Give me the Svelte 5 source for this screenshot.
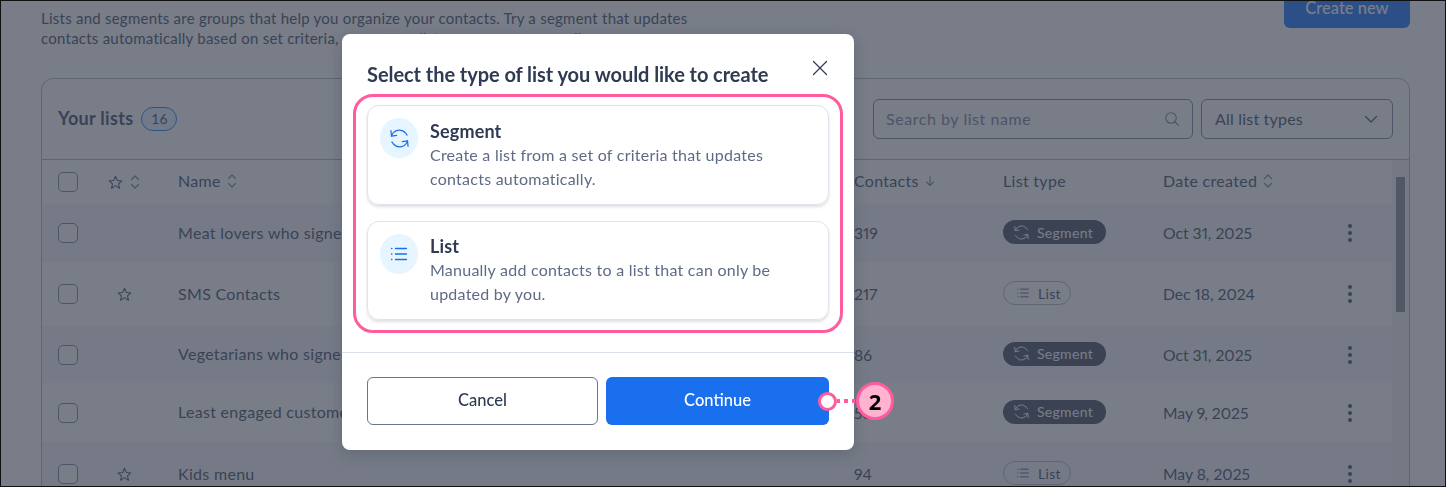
<script lang="ts">
    const rows = [
        { name: 'Meat lovers who signed up', star: false, contacts: '319', type: 'Segment', date: 'Oct 31, 2025', h: 58 },
        { name: 'SMS Contacts', star: true, contacts: '217', type: 'List', date: 'Dec 18, 2024', h: 64 },
        { name: 'Vegetarians who signed up', star: false, contacts: '86', type: 'Segment', date: 'Oct 31, 2025', h: 57 },
        { name: 'Least engaged customers', star: false, contacts: '53', type: 'Segment', date: 'May 9, 2025', h: 59 },
        { name: 'Kids menu', star: true, contacts: '94', type: 'List', date: 'May 8, 2025', h: 64 },
    ];
</script>

{#snippet refresh(size)}
    <svg width={size} height={size} viewBox="0 0 20 20" fill="none" stroke="currentColor" stroke-width="1.3" stroke-linecap="round" stroke-linejoin="round">
        <path d="M1.6 7.5A8.6 8.6 0 0 1 16.4 4.2l1.6 2.2" />
        <path d="M1 1.8l.6 5.7 5.4-.9" />
        <path d="M18.4 12.5A8.6 8.6 0 0 1 3.6 15.8L2 13.6" />
        <path d="M19 18.2l-.6-5.7-5.4.9" />
    </svg>
{/snippet}

{#snippet listIcon(size)}
    <svg width={size} height={size} viewBox="0 0 20 20" fill="none" stroke="currentColor" stroke-width="1.3" stroke-linecap="round">
        <path d="M6.5 4.5h11M6.5 10h11M6.5 15.5h11" />
        <path d="M2.5 4.5h.4M2.5 10h.4M2.5 15.5h.4" />
    </svg>
{/snippet}

{#snippet star()}
    <svg class="star" width="15" height="15" viewBox="0 0 16 16" fill="none" stroke="currentColor" stroke-width="1.1" stroke-linejoin="round">
        <path d="M8 1.4l2 4.4 4.8.5-3.6 3.2 1 4.7L8 11.4l-4.2 2.8 1-4.7L1.2 6.3 6 5.8z" />
    </svg>
{/snippet}

{#snippet sort()}
    <svg class="sort" width="10" height="16" viewBox="0 0 10 16" fill="none" stroke="currentColor" stroke-width="1.2" stroke-linecap="round" stroke-linejoin="round">
        <path d="M1.5 5.5L5 2l3.5 3.5M1.5 10.5L5 14l3.5-3.5" />
    </svg>
{/snippet}

<div class="page">
    <div class="intro">
        <p>Lists and segments are groups that help you organize your contacts. Try a segment that updates contacts automatically based on set criteria, or create a list you manage manually.</p>
        <button class="create">Create new</button>
    </div>

    <div class="panel">
        <div class="panel-head">
            <h2>Your lists</h2>
            <span class="count">16</span>
            <div class="search">
                <span>Search by list name</span>
                <svg width="16" height="16" viewBox="0 0 16 16" fill="none" stroke="currentColor" stroke-width="1.1" stroke-linecap="round">
                    <circle cx="7" cy="7" r="5.3" />
                    <path d="M11 11l3.4 3.4" />
                </svg>
            </div>
            <div class="select">
                <span>All list types</span>
                <svg width="14" height="14" viewBox="0 0 14 14" fill="none" stroke="currentColor" stroke-width="1.2" stroke-linecap="round" stroke-linejoin="round">
                    <path d="M1.5 4.5L7 10l5.5-5.5" />
                </svg>
            </div>
        </div>

        <div class="table">
            <div class="rows">
                <div class="row head">
                    <span class="check"></span>
                    <span class="head-star">{@render star()}{@render sort()}</span>
                    <span class="cell">Name {@render sort()}</span>
                    <span class="cell">Contacts
                        <svg class="down" width="10" height="12" viewBox="0 0 10 12" fill="none" stroke="currentColor" stroke-width="1.1" stroke-linecap="round" stroke-linejoin="round">
                            <path d="M5 1.5v9M1.5 7L5 10.5 8.5 7" />
                        </svg>
                    </span>
                    <span class="cell">List type</span>
                    <span class="cell">Date created {@render sort()}</span>
                    <span></span>
                </div>
                {#each rows as row, i}
                    <div class="row" class:shade={i % 2 === 0} style:height="{row.h}px">
                        <span class="check"></span>
                        <span class="row-star">{#if row.star}{@render star()}{/if}</span>
                        <span class="cell">{row.name}</span>
                        <span class="cell num">{row.contacts}</span>
                        <span class="type">
                            {#if row.type === 'Segment'}
                                <span class="chip segment">{@render refresh(15)}Segment</span>
                            {:else}
                                <span class="chip list">{@render listIcon(14)}List</span>
                            {/if}
                        </span>
                        <span class="cell num">{row.date}</span>
                        <span class="kebab"><i></i><i></i><i></i></span>
                    </div>
                {/each}
            </div>
            <div class="track"><div class="thumb"></div></div>
        </div>
    </div>
</div>

<div class="overlay">
    <div class="modal">
        <div class="modal-head">
            <h3>Select the type of list you would like to create</h3>
            <svg class="close" width="16" height="16" viewBox="0 0 16 16" fill="none" stroke="currentColor" stroke-width="1.2" stroke-linecap="round">
                <path d="M1.5 1.5l13 13M14.5 1.5l-13 13" />
            </svg>
        </div>

        <div class="cards">
            <div class="card">
                <span class="bubble">{@render refresh(19)}</span>
                <div class="copy">
                    <h4>Segment</h4>
                    <p>Create a list from a set of criteria that updates contacts automatically.</p>
                </div>
            </div>
            <div class="card second">
                <span class="bubble">{@render listIcon(20)}</span>
                <div class="copy">
                    <h4>List</h4>
                    <p>Manually add contacts to a list that can only be updated by you.</p>
                </div>
            </div>
        </div>

        <div class="actions">
            <button class="cancel">Cancel</button>
            <button class="continue">Continue</button>
        </div>

        <div class="highlight"></div>
        <div class="callout">
            <span class="pin"></span>
            <span class="dots"></span>
            <span class="number">2</span>
        </div>
    </div>
</div>

<style>
:global(body) {
    margin: 0;
    overflow: hidden;
    font-family: Lato, "Open Sans", sans-serif;
    background: #fff;
}

.page {
    height: 487px;
    box-sizing: border-box;
    padding: 8px 36px 0 41px;
    overflow: hidden;
    color: #2f3b52;
}

.intro {
    display: flex;
    justify-content: space-between;
    align-items: flex-start;
    height: 70px;
}

.intro p {
    width: 655px;
    margin: 0;
    font-size: 15px;
    line-height: 20px;
    letter-spacing: 0.24px;
}

.create {
    width: 126px;
    height: 40px;
    margin-top: -20px;
    border: 0;
    border-radius: 6px;
    background: #0067ff;
    color: #fff;
    font: 500 16.5px Lato, sans-serif;
}

.panel {
    border: 1px solid #a9afbd;
    border-radius: 12px 12px 0 0;
}

.panel-head {
    display: flex;
    align-items: center;
    height: 80px;
    padding: 0 16px;
    border-bottom: 1px solid #a9afbd;
}

h2 {
    margin: 0 8px 2px 0;
    font-size: 18px;
    font-weight: 700;
    letter-spacing: 0.3px;
}

.count {
    width: 36px;
    height: 24px;
    box-sizing: border-box;
    border: 1px solid #1a6fee;
    border-radius: 12px;
    background: #e6f5ff;
    font-size: 14px;
    line-height: 22px;
    text-align: center;
}

.search, .select {
    display: flex;
    align-items: center;
    justify-content: space-between;
    box-sizing: border-box;
    height: 40px;
    padding: 0 12px;
    border: 1px solid #6b7590;
    border-radius: 6px;
    font-size: 16px;
    letter-spacing: 0.3px;
}

.search span, .select span {
    margin-bottom: 2px;
}

.search {
    width: 320px;
    margin-left: auto;
    color: #6b7590;
    letter-spacing: 0.55px;
}

.select {
    width: 192px;
    margin-left: 8px;
    padding: 0 14px 0 13px;
    letter-spacing: 0.2px;
}

.table {
    display: flex;
}

.rows {
    flex: 1;
}

.row {
    display: grid;
    grid-template-columns: 50px 70px 676px 149px 160px 177px 1fr;
    align-items: center;
    padding-left: 16px;
    font-size: 16px;
    letter-spacing: 0.3px;
}

.head {
    height: 44px;
}

.head .cell {
    padding-bottom: 3px;
}

.shade {
    background: #f5f6f9;
}

.check {
    box-sizing: border-box;
    width: 20px;
    height: 20px;
    border: 1px solid #6b7590;
    border-radius: 5px;
    background: #fff;
}

.head-star {
    display: flex;
    align-items: center;
    gap: 7px;
}

.row-star {
    display: flex;
    padding-left: 9px;
}

.cell {
    display: flex;
    align-items: center;
    gap: 6px;
    padding-bottom: 2px;
    white-space: nowrap;
}

.cell.num {
    padding-bottom: 0;
    font-size: 15.7px;
    font-variant-numeric: proportional-nums;
    letter-spacing: 0;
}

.sort, .down {
    color: #6b7590;
}

.type {
    display: flex;
    margin-top: -2px;
}

.chip {
    display: inline-flex;
    align-items: center;
    gap: 8px;
    box-sizing: border-box;
    height: 24px;
    border-radius: 12px;
    font-size: 14px;
}

.segment {
    width: 103px;
    padding-left: 11px;
    background: #2f3b52;
    color: #fff;
}

.list {
    width: 68px;
    padding-left: 12px;
    border: 1px solid #a9afbd;
}

.kebab {
    display: flex;
    flex-direction: column;
    gap: 3px;
    margin-left: 8px;
}

.kebab i {
    width: 4px;
    height: 4px;
    border-radius: 50%;
    background: #2f3b52;
}

.track {
    width: 17px;
    background: #f1f1f1;
}

.thumb {
    width: 9px;
    height: 135px;
    margin: 17px 0 0 4px;
    background: #7a7f8a;
}

.overlay {
    position: fixed;
    inset: 0;
    box-sizing: border-box;
    padding: 34px 0 0 342px;
    border: 1px solid #111;
    background: rgba(62, 70, 85, 0.7);
}

.modal {
    position: relative;
    box-sizing: border-box;
    width: 512px;
    height: 416px;
    margin: -1px 0 0 -1px;
    border-radius: 8px;
    background: #fff;
    color: #2f3b52;
    box-shadow: 0 4px 16px rgba(20, 28, 45, 0.2);
}

.modal-head {
    display: flex;
    align-items: flex-start;
    justify-content: space-between;
    height: 71px;
    padding: 0 26px 0 25px;
}

h3 {
    margin: 26px 0 0;
    font-size: 20px;
    line-height: 28px;
    font-weight: 700;
    letter-spacing: -0.06px;
}

.close {
    margin-top: 26px;
}

.cards {
    display: flex;
    flex-direction: column;
    gap: 16px;
    padding: 0 25px;
    height: 247px;
    border-bottom: 1px solid #dbe1e8;
}

.card {
    display: flex;
    gap: 12px;
    box-sizing: border-box;
    height: 100px;
    padding: 12px 12px;
    border: 1px solid #dfe3ec;
    border-radius: 12px;
    box-shadow: 0 2px 3px rgba(47, 59, 82, 0.16);
}

.second {
    height: 99px;
}

.second .copy {
    margin-top: -1px;
}

.bubble {
    display: flex;
    flex: none;
    align-items: center;
    justify-content: center;
    width: 38px;
    height: 40px;
    border-radius: 50%;
    background: #e6f5ff;
    color: #1a6fee;
}

h4 {
    margin: 0 0 -2px;
    font-size: 18px;
    line-height: 27px;
    font-weight: 700;
    letter-spacing: 0.15px;
}

.card p {
    margin: 0;
    color: #5f6b85;
    font-size: 16px;
    line-height: 24px;
    letter-spacing: 0.24px;
}

.actions {
    display: flex;
    gap: 8px;
    padding: 24px 25px;
}

.actions button {
    height: 48px;
    padding-bottom: 3px;
    border-radius: 6px;
    font: 500 16.5px Lato, sans-serif;
}

.cancel {
    width: 231px;
    border: 1px solid #6b7590;
    background: #fff;
    color: #2f3b52;
}

.continue {
    width: 223px;
    border: 0;
    background: #1a6fee;
    color: #fff;
}

.highlight {
    position: absolute;
    left: 11px;
    top: 60px;
    width: 490px;
    height: 239px;
    box-sizing: border-box;
    border: 3px solid #ff5c9f;
    border-radius: 20px;
}

.callout {
    position: absolute;
    left: 476px;
    top: 348px;
    display: flex;
    align-items: center;
}

.pin {
    box-sizing: border-box;
    width: 19px;
    height: 19px;
    border: 3px solid #ff5c9f;
    border-radius: 50%;
    background: #fff;
}

.dots {
    width: 19px;
    height: 4px;
    background: repeating-linear-gradient(to right, #ff5c9f 0 3.5px, transparent 3.5px 7.5px);
}

.number {
    box-sizing: border-box;
    width: 38px;
    height: 38px;
    border: 3px solid #ff5c9f;
    border-radius: 50%;
    background: #ffb3d1;
    color: #000;
    font: 700 22px/32px "Open Sans", sans-serif;
    text-align: center;
}
</style>
